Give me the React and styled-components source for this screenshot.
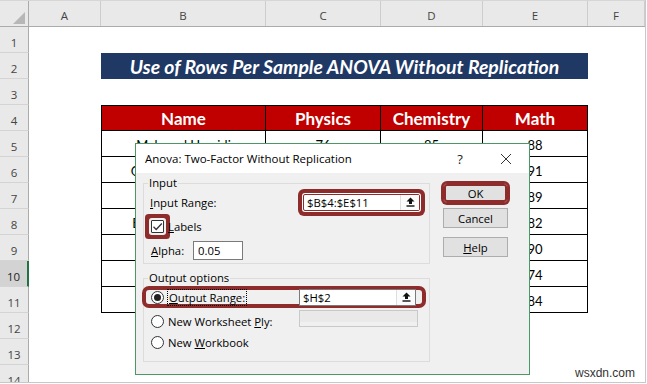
import React from 'react';
import styled, { createGlobalStyle, css } from 'styled-components';

const UI_FONT = `"Open Sans", "Noto Sans", sans-serif`;
const CELL_FONT = `Lato, "Open Sans", sans-serif`;
const RING = '#8e2c2c';

const GlobalStyle = createGlobalStyle`
  html, body { margin: 0; padding: 0; background: #fff; }
  body { width: 647px; height: 384px; overflow: hidden; }
  *, *::before, *::after { box-sizing: border-box; }
`;

const COLS = { rh: 29, A: 72, B: 165, C: 115, D: 102, E: 105, F: 57 };

const Screen = styled.div`
  position: relative;
  width: 647px;
  height: 384px;
  overflow: hidden;
  background: #fff;
`;

const Sheet = styled.div`
  width: 646px;
  height: 383px;
  overflow: hidden;
  border-right: 1px solid #c8c8c8;
  border-bottom: 1px solid #c8c8c8;
`;

const HeaderRow = styled.div`
  display: flex;
  height: 27px;
  background: #e9e9e9;
  border-top: 1px solid #d6d6d6;
  border-bottom: 1px solid #ababab;
`;

const Corner = styled.div`
  width: ${COLS.rh}px;
  flex: none;
  display: flex;
  align-items: flex-end;
  justify-content: flex-end;
  padding: 0 3px 2px 0;
  border-right: 1px solid #ababab;
`;

const ColHead = styled.div`
  width: ${(p) => p.$w}px;
  flex: none;
  display: flex;
  align-items: center;
  justify-content: center;
  padding-top: 4px;
  border-right: 1px solid #cdcdcd;
  font-family: ${UI_FONT};
  font-size: 11.5px;
  color: #444;
`;

const SheetRow = styled.div`
  display: flex;
  height: 26px;
`;

const RowHead = styled.div`
  width: ${COLS.rh}px;
  flex: none;
  display: flex;
  align-items: center;
  justify-content: center;
  padding-top: 6px;
  background: ${(p) => (p.$sel ? '#d3d3d3' : '#e9e9e9')};
  border-bottom: 1px solid #d4d4d4;
  border-right: ${(p) => (p.$sel ? '2px solid #217346' : '1px solid #ababab')};
  font-family: ${UI_FONT};
  font-size: 11.5px;
  color: ${(p) => (p.$sel ? '#222' : '#444')};
`;

const Cell = styled.div`
  width: ${(p) => p.$w}px;
  flex: none;
  display: flex;
  align-items: center;
  justify-content: center;
  font-family: ${CELL_FONT};
  font-size: 13px;
  color: #000;
  white-space: nowrap;
  overflow: hidden;
`;

const TitleCell = styled(Cell)`
  background: #1f3864;
  color: #fff;
  font-weight: 700;
  font-style: italic;
  font-size: 19.4px;
`;

const TableCell = styled(Cell)`
  padding-top: 3px;
  border-right: 1px solid #000;
  border-bottom: 1px solid #000;
  ${(p) => p.$first && css`border-left: 1px solid #000;`}
  ${(p) =>
    p.$head &&
    css`
      padding-top: 0;
      background: #c00000;
      color: #fff;
      font-weight: 700;
      font-size: 17px;
      border-top: 1px solid #000;
    `}
`;

/* ---------- dialog ---------- */

const Dialog = styled.div`
  position: absolute;
  left: 135px;
  top: 143px;
  width: 395px;
  height: 232px;
  border: 1px solid #4a9866;
  background: #f0f0f0;
  display: flex;
  flex-direction: column;
  font-family: ${UI_FONT};
  font-size: 11.3px;
  color: #000;
`;

const TitleBar = styled.div`
  height: 29px;
  flex: none;
  background: #fff;
  display: flex;
  align-items: center;
  padding-left: 9px;
  padding-right: 11px;
`;

const TitleText = styled.div`
  flex: 1;
  font-size: 11.5px;
  color: #000;
`;

const HelpMark = styled.div`
  width: 20px;
  text-align: center;
  font-size: 13px;
  color: #222;
`;

const CloseBox = styled.div`
  width: 24px;
  margin-left: 24px;
  display: flex;
  align-items: center;
  justify-content: center;
`;

const DialogBody = styled.div`
  display: flex;
  flex: 1;
`;

const Groups = styled.div`
  width: 287px;
  margin-left: 7px;
  margin-top: 3px;
  display: flex;
  flex-direction: column;
`;

const Group = styled.fieldset`
  margin: ${(p) => p.$mt || 0}px 0 0 0;
  padding: 0 8px ${(p) => p.$pb}px 6px;
  border: 1px solid #dcdcdc;
  min-width: 0;
`;

const Legend = styled.legend`
  padding: 0 1px;
  margin-left: -2px;
  line-height: 14px;
  font-size: 11.3px;
`;

const FormRow = styled.div`
  display: flex;
  align-items: center;
  height: ${(p) => p.$h}px;
  ${(p) =>
    p.$ring &&
    css`
      height: ${p.$h - 2}px;
      margin: 1px -5px 1px -8px;
      padding: 0 5px 0 8px;
      border-radius: 7px;
      box-shadow: inset 0 0 0 4px ${RING};
    `}
`;

const FieldLabel = styled.div`
  width: ${(p) => p.$w}px;
  flex: none;
  padding-left: ${(p) => p.$pl || 0}px;
  white-space: nowrap;
`;

const RefField = styled.div`
  width: ${(p) => p.$w || 117}px;
  height: ${(p) => p.$h || 17}px;
  flex: none;
  display: flex;
  align-items: stretch;
  background: #fff;
  border: 1px solid #7a7a7a;
  ${(p) =>
    p.$ring &&
    css`
      border-color: ${RING};
      border-radius: 2px;
      box-shadow: 0 0 0 1px #fff, 0 0 0 5px ${RING};
    `}
  ${(p) =>
    p.$disabled &&
    css`
      align-self: flex-start;
      margin-top: 1px;
      background: #e9e9e9;
      border-color: #c9c9c9;
      box-shadow: inset 0 -4px 0 #f0f0f0;
    `}
`;

const RefText = styled.div`
  flex: 1;
  padding-left: 3px;
  display: flex;
  align-items: center;
  white-space: nowrap;
`;

const CollapseButton = styled.div`
  width: 19px;
  flex: none;
  display: flex;
  align-items: center;
  justify-content: center;
  background: #fbfbfb;
  border-left: 1px solid #dedede;
`;

const TextBox = styled.div`
  width: ${(p) => p.$w}px;
  height: 19px;
  flex: none;
  display: flex;
  align-items: center;
  padding-left: 4px;
  background: #fff;
  border: 1px solid #7a7a7a;
`;

const CheckBox = styled.div`
  width: 13px;
  height: 13px;
  flex: none;
  margin-left: 1px;
  background: #fff;
  border: 1px solid #333;
  display: flex;
  align-items: center;
  justify-content: center;
  ${(p) =>
    p.$ring &&
    css`
      border-radius: 1px;
      box-shadow: 0 0 0 2px #f0f0f0, 0 0 0 6px ${RING};
    `}
`;

const Radio = styled.div`
  width: 13px;
  height: 13px;
  flex: none;
  margin-left: 1px;
  border-radius: 50%;
  background: #fff;
  border: 1px solid #333;
  display: flex;
  align-items: center;
  justify-content: center;
  &::after {
    content: '';
    display: ${(p) => (p.$checked ? 'block' : 'none')};
    width: 7px;
    height: 7px;
    border-radius: 50%;
    background: #222;
  }
`;

const OptionText = styled.div`
  width: ${(p) => (p.$w ? `${p.$w}px` : 'auto')};
  flex: none;
  margin-left: 4px;
  white-space: nowrap;
`;

const FocusText = styled.span`
  outline: 1px dotted #000;
  outline-offset: 0px;
  padding: 0 1px;
  line-height: 15px;
`;

const ButtonColumn = styled.div`
  width: 65px;
  margin-left: 13px;
  padding-top: 10px;
  display: flex;
  flex-direction: column;
`;

const DlgButton = styled.button`
  height: 20px;
  margin: ${(p) => p.$mt || 0}px 0 0 0;
  padding: 0;
  border: 1px solid #adadad;
  background: #e1e1e1;
  font-family: ${UI_FONT};
  font-size: 11.3px;
  color: #000;
  ${(p) =>
    p.$ring &&
    css`
      border-color: ${RING};
      border-radius: 4px;
      box-shadow: 0 0 0 2px ${RING}, inset 0 0 0 2px ${RING};
    `}
`;

const Watermark = styled.div`
  position: absolute;
  left: 575px;
  top: 366px;
  font-family: "Liberation Sans", Arial, sans-serif;
  font-size: 12px;
  color: #333;
`;

/* ---------- icons ---------- */

const CornerTriangle = () => (
  <svg width="12" height="12" viewBox="0 0 12 12">
    <polygon points="12,0 12,12 0,12" fill="#b7b7b7" />
  </svg>
);

const CloseIcon = () => (
  <svg width="12" height="12" viewBox="0 0 12 12">
    <path d="M1 1 L11 11 M11 1 L1 11" stroke="#333" strokeWidth="1" fill="none" />
  </svg>
);

const CollapseIcon = () => (
  <svg width="9" height="10" viewBox="0 0 9 10">
    <polygon points="4.5,0.5 8.5,4.5 6,4.5 6,7 3,7 3,4.5 0.5,4.5" fill="#111" />
    <rect x="0.5" y="8.3" width="8" height="1.4" fill="#111" />
  </svg>
);

const CheckIcon = () => (
  <svg width="11" height="11" viewBox="0 0 11 11">
    <path d="M1.5 5.8 L4.2 8.5 L9.8 2.5" stroke="#333" strokeWidth="1.3" fill="none" />
  </svg>
);

/* ---------- data ---------- */

const COL_LETTERS = [
  ['A', COLS.A],
  ['B', COLS.B],
  ['C', COLS.C],
  ['D', COLS.D],
  ['E', COLS.E],
  ['F', COLS.F],
];

const STUDENTS = [
  ['Mahmud Hamidi', 76, 85, 88],
  ['Gilbert Richardson', 81, 78, 91],
  ['Lily Adams', 72, 80, 89],
  ['Elizabeth Johnson', 88, 79, 82],
  ['Henry Clark', 69, 84, 90],
  ['Olivia Brown', 85, 77, 74],
  ['Sam Walker', 79, 90, 84],
];

export default function App() {
  return (
    <Screen>
      <GlobalStyle />
      <Sheet>
        <HeaderRow>
          <Corner>
            <CornerTriangle />
          </Corner>
          {COL_LETTERS.map(([l, w]) => (
            <ColHead key={l} $w={w}>
              {l}
            </ColHead>
          ))}
        </HeaderRow>

        <SheetRow>
          <RowHead>1</RowHead>
        </SheetRow>

        <SheetRow>
          <RowHead>2</RowHead>
          <Cell $w={COLS.A} />
          <TitleCell $w={COLS.B + COLS.C + COLS.D + COLS.E}>
            Use of Rows Per Sample ANOVA Without Replication
          </TitleCell>
        </SheetRow>

        <SheetRow>
          <RowHead>3</RowHead>
        </SheetRow>

        <SheetRow>
          <RowHead>4</RowHead>
          <Cell $w={COLS.A} />
          <TableCell $w={COLS.B} $head $first>Name</TableCell>
          <TableCell $w={COLS.C} $head>Physics</TableCell>
          <TableCell $w={COLS.D} $head>Chemistry</TableCell>
          <TableCell $w={COLS.E} $head>Math</TableCell>
        </SheetRow>

        {STUDENTS.map(([name, p, c, m], i) => (
          <SheetRow key={name}>
            <RowHead $sel={i + 5 === 10}>{i + 5}</RowHead>
            <Cell $w={COLS.A} />
            <TableCell $w={COLS.B} $first>{name}</TableCell>
            <TableCell $w={COLS.C}>{p}</TableCell>
            <TableCell $w={COLS.D}>{c}</TableCell>
            <TableCell $w={COLS.E}>{m}</TableCell>
          </SheetRow>
        ))}

        {[12, 13, 14].map((n) => (
          <SheetRow key={n}>
            <RowHead>{n}</RowHead>
          </SheetRow>
        ))}
      </Sheet>

      <Dialog>
        <TitleBar>
          <TitleText>Anova: Two-Factor Without Replication</TitleText>
          <HelpMark>?</HelpMark>
          <CloseBox>
            <CloseIcon />
          </CloseBox>
        </TitleBar>

        <DialogBody>
          <Groups>
            <Group $pb={2}>
              <Legend>Input</Legend>
              <FormRow $h={24}>
                <FieldLabel $w={153}>
                  <u>I</u>nput Range:
                </FieldLabel>
                <RefField $ring>
                  <RefText>$B$4:$E$11</RefText>
                  <CollapseButton>
                    <CollapseIcon />
                  </CollapseButton>
                </RefField>
              </FormRow>
              <FormRow $h={25}>
                <CheckBox $ring>
                  <CheckIcon />
                </CheckBox>
                <OptionText>
                  <u>L</u>abels
                </OptionText>
              </FormRow>
              <FormRow $h={22}>
                <FieldLabel $w={43} $pl={1}>
                  <u>A</u>lpha:
                </FieldLabel>
                <TextBox $w={50}>0.05</TextBox>
              </FormRow>
            </Group>

            <Group $pb={10} $mt={7}>
              <Legend>Output options</Legend>
              <FormRow $h={24} $ring>
                <Radio $checked />
                <OptionText $w={131}>
                  <FocusText>
                    <u>O</u>utput Range:
                  </FocusText>
                </OptionText>
                <RefField>
                  <RefText>$H$2</RefText>
                  <CollapseButton>
                    <CollapseIcon />
                  </CollapseButton>
                </RefField>
              </FormRow>
              <FormRow $h={24}>
                <Radio />
                <OptionText $w={131}>
                  New Worksheet <u>P</u>ly:
                </OptionText>
                <RefField $w={119} $disabled />
              </FormRow>
              <FormRow $h={18}>
                <Radio />
                <OptionText>
                  New <u>W</u>orkbook
                </OptionText>
              </FormRow>
            </Group>
          </Groups>

          <ButtonColumn>
            <DlgButton $ring>OK</DlgButton>
            <DlgButton $mt={5}>Cancel</DlgButton>
            <DlgButton $mt={9}>
              <u>H</u>elp
            </DlgButton>
          </ButtonColumn>
        </DialogBody>
      </Dialog>

      <Watermark>wsxdn.com</Watermark>
    </Screen>
  );
}
